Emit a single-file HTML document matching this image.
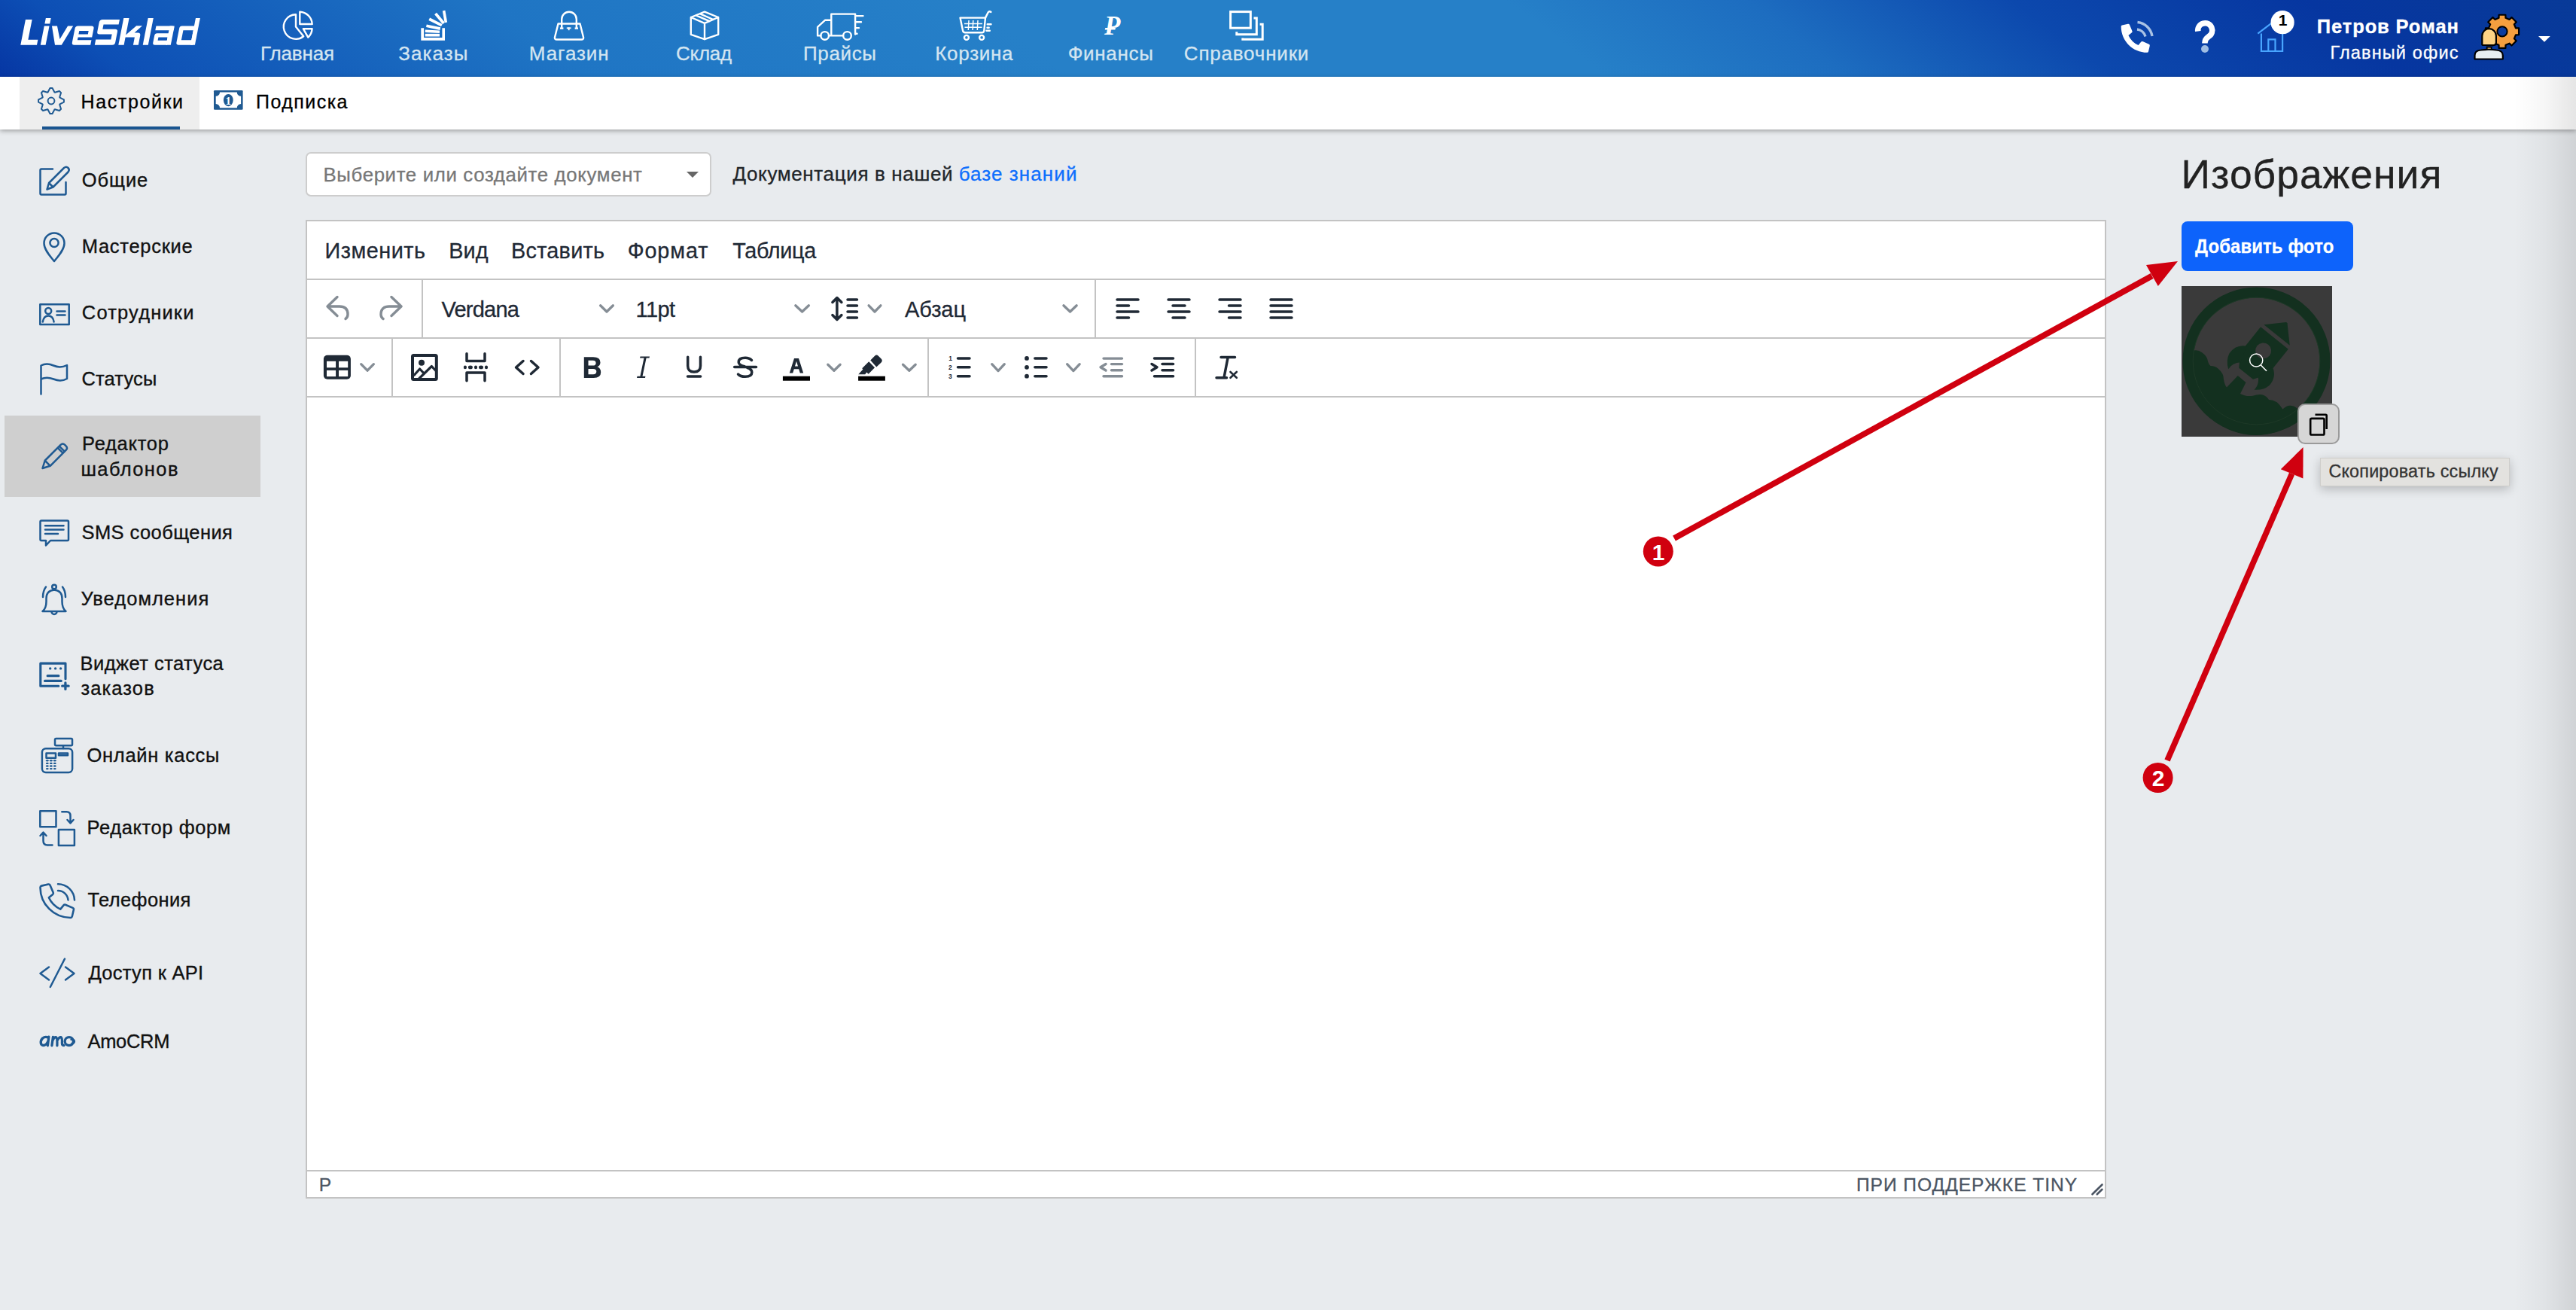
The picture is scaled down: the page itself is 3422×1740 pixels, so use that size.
<!DOCTYPE html>
<html><head><meta charset="utf-8"><title>LiveSklad</title>
<style>
html,body{margin:0;padding:0}
body{width:3422px;height:1740px;overflow:hidden;background:#e8ebee;position:relative;font-family:"Liberation Sans",sans-serif}
.t{position:absolute;white-space:nowrap;line-height:1;-webkit-text-stroke:0.3px currentColor}
.sb{-webkit-text-stroke:0.35px currentColor}
svg{display:block}
</style></head><body>
<div style="position:absolute;left:0px;top:0px;width:3422px;height:102px;background:linear-gradient(37deg,#0636a3 0%,#0d4fb5 5%,#1f75c4 22%,#2680c8 40%,#2680c8 60%,#1d6dc0 69%,#0c48ad 79%,#0636a0 90%,#083a98 100%)"></div>
<svg style="position:absolute;left:0px;top:0px;overflow:visible;" width="300" height="80" viewBox="0 0 300 80"><g fill="#fff" fill-rule="evenodd" transform="translate(0 59.7) skewX(-11.1)"><path d="M27.3 0 H49 V-7 H36 V-33.8 H27.3 Z"/><path d="M53.8 -25.3 H60.6 V0 H53.8 V-25.3 Z "/><path d="M53.9 -35.6 H60.7 V-28.1 H53.9 V-35.6 Z "/><path d="M64 -25.3 H71 L78 -7.6 L85.1 -25.3 H92.2 L81.8 0 H73 Z"/><path d="M98.7 -25.3 H116.7 Q120.2 -25.3 120.2 -21.8 V-10.2 H101.6 V-6.4 H120.2 V0 H98.7 Q95.2 0 95.2 -3.5 V-21.8 Q95.2 -25.3 98.7 -25.3 Z M101.6 -18.7 V-14.2 H114 V-18.7 Z"/><path d="M129.8 -33.8 H152.3 V-27.1 H132.2 V-21 H149 Q152.5 -21 152.5 -17.5 V-3.5 Q152.5 0 149 0 H125.8 V-7.3 H145.9 V-14.3 H129.3 Q125.8 -14.3 125.8 -17.8 V-29.8 Q125.8 -33.8 129.8 -33.8 Z"/><path d="M157.3 -35.6 H164.6 V0 H157.3 V-35.6 Z "/><path d="M163 -10.1 V-11.8 L176.2 -25.4 H184 L175.4 -16.2 H180 Q183.8 -16.2 183.8 -12.4 V0 H176.9 V-10.1 Z"/><path d="M189.7 -35.6 H196.8 V0 H189.7 V-35.6 Z "/><path d="M202.5 -25.3 H223.8 Q226.8 -25.3 226.8 -22.3 V-19.5 H202.5 V-25.3 Z "/><path d="M220.6 -25.3 H226.8 V0 H220.6 V-25.3 Z "/><path d="M205.7 -15.5 H222 V0 H205.7 Q202.7 0 202.7 -3 V-12.5 Q202.7 -15.5 205.7 -15.5 Z M208.4 -10.3 H220.6 V-5.9 H208.4 V-10.3 Z "/><path d="M236.8 -25.3 H256 V0 H236.8 Q233.8 0 233.8 -3 V-22.3 Q233.8 -25.3 236.8 -25.3 Z M239.6 -19.5 H253 V-6.5 H239.6 V-19.5 Z "/><path d="M253 -35.6 H258.9 V0 H253 V-35.6 Z "/></g></svg>
<div id="T_nav0" class="t" style="left:346.04px;top:58.00px;font-size:26px;color:#d4e5f1;font-weight:normal;font-family:'Liberation Sans',sans-serif;font-style:normal;letter-spacing:-0.150px;">Главная</div>
<div id="T_nav1" class="t" style="left:529.24px;top:58.00px;font-size:26px;color:#d4e5f1;font-weight:normal;font-family:'Liberation Sans',sans-serif;font-style:normal;letter-spacing:1.060px;">Заказы</div>
<div id="T_nav2" class="t" style="left:702.84px;top:58.00px;font-size:26px;color:#d4e5f1;font-weight:normal;font-family:'Liberation Sans',sans-serif;font-style:normal;letter-spacing:0.917px;">Магазин</div>
<div id="T_nav3" class="t" style="left:898.04px;top:58.00px;font-size:26px;color:#d4e5f1;font-weight:normal;font-family:'Liberation Sans',sans-serif;font-style:normal;letter-spacing:-0.275px;">Склад</div>
<div id="T_nav4" class="t" style="left:1067.04px;top:58.00px;font-size:26px;color:#d4e5f1;font-weight:normal;font-family:'Liberation Sans',sans-serif;font-style:normal;letter-spacing:0.640px;">Прайсы</div>
<div id="T_nav5" class="t" style="left:1242.24px;top:58.00px;font-size:26px;color:#d4e5f1;font-weight:normal;font-family:'Liberation Sans',sans-serif;font-style:normal;letter-spacing:0.717px;">Корзина</div>
<div id="T_nav6" class="t" style="left:1418.64px;top:58.00px;font-size:26px;color:#d4e5f1;font-weight:normal;font-family:'Liberation Sans',sans-serif;font-style:normal;letter-spacing:0.683px;">Финансы</div>
<div id="T_nav7" class="t" style="left:1572.84px;top:58.00px;font-size:26px;color:#d4e5f1;font-weight:normal;font-family:'Liberation Sans',sans-serif;font-style:normal;letter-spacing:0.800px;">Справочники</div>
<svg style="position:absolute;left:365px;top:8px;overflow:visible;" width="60" height="50" viewBox="0 0 60 50"><path fill="none" stroke="#fff" stroke-width="2.4" stroke-linejoin="round" stroke-linecap="round" d="M28 11.2 A16.3 16.3 0 1 0 38.2 40.3 L28 27.6 Z"/><path fill="none" stroke="#fff" stroke-width="2.4" stroke-linejoin="round" stroke-linecap="round" d="M33.3 7.7 A17 17 0 0 1 49.7 24 L33.3 24 Z"/><path fill="none" stroke="#fff" stroke-width="2.4" stroke-linejoin="round" stroke-linecap="round" d="M37.8 30.2 L49.6 30.2 A17.2 17.2 0 0 1 44.3 41.6 Z"/></svg>
<svg style="position:absolute;left:365px;top:8px;overflow:visible;" width="240" height="50" viewBox="0 0 240 50"><g fill="#fff"><path d="M194.3 29.3h3.8v12.6h24.3V29.3h3.6v16.4h-31.7z"/><rect x="199.8" y="36.8" width="19.2" height="3.7"/><rect x="199.8" y="31.9" width="19.2" height="3.7" transform="rotate(3 209 33.7)"/><rect x="201.2" y="26.3" width="18.8" height="3.7" transform="rotate(12 210.6 28.1)"/><rect x="204.2" y="19.6" width="18.6" height="3.7" transform="rotate(27 213.5 21.5)"/><rect x="210.5" y="14.6" width="17" height="3.7" transform="rotate(50 219 16.5)"/><rect x="218" y="12.2" width="16" height="3.6" transform="rotate(80 226 14)"/></g></svg>
<svg style="position:absolute;left:725px;top:8px;overflow:visible;" width="60" height="50" viewBox="0 0 60 50"><path fill="none" stroke="#fff" stroke-width="2.4" stroke-linejoin="round" stroke-linecap="round" d="M16.5 23.5 L45.5 23.5 L50 41.5 Q50.5 44.5 47.5 44.5 L14.5 44.5 Q11.5 44.5 12 41.5 Z"/><path fill="none" stroke="#fff" stroke-width="2.4" stroke-linejoin="round" stroke-linecap="round" d="M21.2 28 V17.5 A9.8 9.8 0 0 1 40.8 17.5 V28"/><g fill="#fff"><rect x="19" y="28.4" width="4.4" height="2.4"/><rect x="38.6" y="28.4" width="4.4" height="2.4"/><rect x="27.8" y="28.4" width="5.8" height="1.8"/><rect x="29.8" y="28.4" width="1.8" height="3.8"/></g></svg>
<svg style="position:absolute;left:725px;top:8px;overflow:visible;" width="240" height="50" viewBox="0 0 240 50"><path fill="none" stroke="#fff" stroke-width="2.4" stroke-linejoin="round" stroke-linecap="round" d="M192.8 15 L211 7.6 L229.2 15 V37.8 L211 44.2 L192.8 37.8 Z M192.8 15 L211 22.9 L229.2 15 M211 22.9 V44.2 M199.5 12.3 L217.5 20.2 M204.5 10.2 L222.5 18"/></svg>
<svg style="position:absolute;left:1075px;top:8px;overflow:visible;" width="80" height="50" viewBox="0 0 80 50"><path fill="none" stroke="#fff" stroke-width="2.4" stroke-linejoin="round" stroke-linecap="round" d="M29.3 39.4 V10.6 H61.1 V37.5 M44.6 39.4 H26 M15.2 39.4 H11.1 V27.8 L21.2 18.7 H29.3"/><circle fill="none" stroke="#fff" stroke-width="2.4" stroke-linejoin="round" stroke-linecap="round" cx="20.7" cy="39.4" r="5.3"/><circle fill="none" stroke="#fff" stroke-width="2.4" stroke-linejoin="round" stroke-linecap="round" cx="50.5" cy="39.4" r="5.3"/><path fill="none" stroke="#fff" stroke-width="2.4" stroke-linejoin="round" stroke-linecap="round" d="M61.6 13.1 H71.5 M61.6 21.2 H69 M61.6 29.1 H66 M61.6 36.8 H63.5"/></svg>
<svg style="position:absolute;left:1075px;top:8px;overflow:visible;" width="250" height="50" viewBox="0 0 250 50"><path fill="none" stroke="#fff" stroke-width="2.4" stroke-linejoin="round" stroke-linecap="round" d="M200.5 15.6 H234 L232.3 32.5 Q232 35.3 229.5 35.3 H207 Q204.5 35.3 204 32.5 Z"/><path fill="none" stroke="#fff" stroke-width="2.4" stroke-linejoin="round" stroke-linecap="round" d="M234 15.6 L237.6 8.5 Q239.3 6.2 241.4 8"/><g stroke="#fff" stroke-width="1.5" fill="none"><path d="M206 23.4 H230 M206.5 28.3 H229.5 M212 19 L211.3 32 M217.8 19 L217.1 32 M224 19 L223.3 32"/></g><circle fill="none" stroke="#fff" stroke-width="2.4" stroke-linejoin="round" stroke-linecap="round" cx="208.9" cy="41.9" r="3"/><circle fill="none" stroke="#fff" stroke-width="2.4" stroke-linejoin="round" stroke-linecap="round" cx="229.1" cy="41.9" r="3"/><path fill="none" stroke="#fff" stroke-width="2.4" stroke-linejoin="round" stroke-linecap="round" stroke-width="1.8" d="M236.7 24.2 H241.5 M236.5 28.8 H238.7 M235.5 32.8 H239.8"/></svg>
<svg style="position:absolute;left:1455px;top:8px;overflow:visible;" width="45" height="50" viewBox="0 0 45 50"><text x="12" y="37.5" font-family="Liberation Serif" font-weight="bold" font-style="italic" font-size="35" fill="#fff">P</text><path d="M13.3 29 H27 L26.4 31.6 H12.7 Z" fill="#fff"/></svg>
<svg style="position:absolute;left:1455px;top:8px;overflow:visible;" width="240" height="50" viewBox="0 0 240 50"><g fill="none" stroke="#fff" stroke-width="3"><rect x="179.6" y="7.6" width="26.7" height="21.6"/><path d="M187.8 34.2 V37.7 H214.3 V15.9 H210.5"/><path d="M195.8 42.4 V44.2 H222.2 V24.3 H218.6"/></g></svg>
<svg style="position:absolute;left:2800px;top:10px;overflow:visible;" width="260" height="80" viewBox="0 0 260 80"><path fill="#fff" transform="translate(17.7 21.7) scale(0.0745)" d="M497.39 361.8l-112-48a24 24 0 0 0-28 6.9l-49.6 60.6A370.66 370.66 0 0 1 130.6 204.11l60.6-49.6a23.94 23.94 0 0 0 6.9-28l-48-112A24.16 24.16 0 0 0 122.6.61l-104 24A24 24 0 0 0 0 48c0 256.5 207.9 464 464 464a24 24 0 0 0 23.4-18.6l24-104a24.29 24.29 0 0 0-14.01-27.6z"/><g fill="none" stroke="#a9c2e4" stroke-width="3.4"><path d="M39 29 A13 13 0 0 1 50 38.5"/><path d="M39.5 19.5 A22 22 0 0 1 59 38"/></g><path fill="none" stroke="#fff" stroke-width="7.6" stroke-linecap="butt" d="M119.8 31.5 A9.5 9.5 0 1 1 134 38.5 Q129 42 129 46.5 V47.5"/><circle cx="129" cy="55" r="5" fill="#9fbde3"/><g fill="none" stroke="#48a5ff" stroke-width="2.2"><path d="M199.3 34.6 L218 20.4 L236.7 34.6 M203.9 34.5 V58 H232.1 V34.5 M213.3 58 V42.4 H222.5 V58"/></g><circle cx="232.1" cy="19.7" r="15.6" fill="#fff"/><text x="232.5" y="24" text-anchor="middle" font-family="Liberation Sans" font-weight="bold" font-size="21" fill="#000">1</text></svg>
<div id="T_user" class="t" style="left:3077.87px;top:23.00px;font-size:25.5px;color:#fff;font-weight:bold;font-family:'Liberation Sans',sans-serif;font-style:normal;letter-spacing:0.882px;">Петров Роман</div>
<div id="T_office" class="t" style="left:3095.39px;top:59.00px;font-size:23.5px;color:#fff;font-weight:normal;font-family:'Liberation Sans',sans-serif;font-style:normal;letter-spacing:1.155px;">Главный офис</div>
<svg style="position:absolute;left:3270px;top:10px;overflow:visible;" width="130" height="80" viewBox="0 0 130 80"><path d="M71.95 27.30 L76.07 27.41 L76.07 36.19 L71.95 36.30 L69.87 41.31 L72.71 44.30 L66.50 50.51 L63.51 47.67 L58.50 49.75 L58.39 53.87 L49.61 53.87 L49.50 49.75 L44.49 47.67 L41.50 50.51 L35.29 44.30 L38.13 41.31 L36.05 36.30 L31.93 36.19 L31.93 27.41 L36.05 27.30 L38.13 22.29 L35.29 19.30 L41.50 13.09 L44.49 15.93 L49.50 13.85 L49.61 9.73 L58.39 9.73 L58.50 13.85 L63.51 15.93 L66.50 13.09 L72.71 19.30 L69.87 22.29 Z" fill="#f59f3f" stroke="#000" stroke-width="2.2" stroke-linejoin="round"/><circle cx="54" cy="31.8" r="6.6" fill="#0a3ca0" stroke="#000" stroke-width="2"/><path d="M33.7 52.5 H39.6 V57 H33.7 Z" fill="#e6bd78" stroke="#000" stroke-width="1.8"/><path d="M27.3 49.2 V37.5 A9.3 9.3 0 0 1 45.9 37.5 V46.5 Q45.9 50 42.5 50 H30 Q27.3 50 27.3 49.2 Z" fill="#fdd385" stroke="#000" stroke-width="2.2"/><path d="M17.5 68.5 V63.5 Q17.5 57 26 56.5 Q36.5 55 46 56.5 Q54.8 57 54.8 63.5 V68.5 Z" fill="#e8eff1" stroke="#000" stroke-width="2.2" stroke-linejoin="round"/><path d="M102 37.9 H117.8 L110 45.8 Z" fill="#fff"/></svg>
<div style="position:absolute;left:0px;top:102px;width:3422px;height:70px;background:#fff;box-shadow:0 2px 6px rgba(0,0,0,0.32)"></div>
<div style="position:absolute;left:26px;top:102px;width:239px;height:70px;background:#eeeeee"></div>
<div style="position:absolute;left:56px;top:168px;width:183px;height:4px;background:#1a5590"></div>
<svg style="position:absolute;left:45px;top:111px;overflow:visible;" width="46" height="46" viewBox="0 0 46 46"><path d="M34.48 18.58 L39.93 21.46 L39.93 24.54 L34.48 27.42 L34.24 28.00 L36.06 33.88 L33.88 36.06 L28.00 34.24 L27.42 34.48 L24.54 39.93 L21.46 39.93 L18.58 34.48 L18.00 34.24 L12.12 36.06 L9.94 33.88 L11.76 28.00 L11.52 27.42 L6.07 24.54 L6.07 21.46 L11.52 18.58 L11.76 18.00 L9.94 12.12 L12.12 9.94 L18.00 11.76 L18.58 11.52 L21.46 6.07 L24.54 6.07 L27.42 11.52 L28.00 11.76 L33.88 9.94 L36.06 12.12 L34.24 18.00 Z" fill="none" stroke="#1f5a92" stroke-width="2" stroke-linejoin="round"/><circle cx="23" cy="23" r="4.4" fill="none" stroke="#1f5a92" stroke-width="2"/></svg>
<div id="T_sub0" class="t" style="left:107.50px;top:123.00px;font-size:25px;color:#000;font-weight:normal;font-family:'Liberation Sans',sans-serif;font-style:normal;letter-spacing:1.625px;">Настройки</div>
<svg style="position:absolute;left:270px;top:105px;overflow:visible;" width="60" height="45" viewBox="0 0 60 45"><rect x="14" y="15.1" width="38.6" height="25.7" rx="1.2" fill="#1f5a92"/><path fill="#fff" d="M22 17.5 H44.8 A5.3 5.3 0 0 0 50.1 22.8 V33 A5.3 5.3 0 0 0 44.8 38.3 H22 A5.3 5.3 0 0 0 16.7 33 V22.8 A5.3 5.3 0 0 0 22 17.5 Z"/><ellipse cx="33.3" cy="28.1" rx="6.4" ry="8.1" fill="#1f5a92"/><text x="33.3" y="33.5" text-anchor="middle" font-family="Liberation Serif" font-weight="bold" font-size="15" fill="#fff">1</text></svg>
<div id="T_sub1" class="t" style="left:340.10px;top:123.00px;font-size:25px;color:#000;font-weight:normal;font-family:'Liberation Sans',sans-serif;font-style:normal;letter-spacing:1.443px;">Подписка</div>
<div style="position:absolute;left:6px;top:552px;width:340px;height:108px;background:#cfcfcf"></div>
<div id="T_s0" class="t" style="left:108.87px;top:227.00px;font-size:25.5px;color:#111;font-weight:normal;font-family:'Liberation Sans',sans-serif;font-style:normal;letter-spacing:0.875px;-webkit-text-stroke:0.35px #111;">Общие</div>
<div id="T_s1" class="t" style="left:108.67px;top:315.00px;font-size:25.5px;color:#111;font-weight:normal;font-family:'Liberation Sans',sans-serif;font-style:normal;letter-spacing:0.722px;-webkit-text-stroke:0.35px #111;">Мастерские</div>
<div id="T_s2" class="t" style="left:108.87px;top:403.00px;font-size:25.5px;color:#111;font-weight:normal;font-family:'Liberation Sans',sans-serif;font-style:normal;letter-spacing:1.156px;-webkit-text-stroke:0.35px #111;">Сотрудники</div>
<div id="T_s3" class="t" style="left:108.47px;top:491.00px;font-size:25.5px;color:#111;font-weight:normal;font-family:'Liberation Sans',sans-serif;font-style:normal;letter-spacing:0.133px;-webkit-text-stroke:0.35px #111;">Статусы</div>
<div id="T_s4a" class="t" style="left:109.07px;top:577.00px;font-size:25.5px;color:#111;font-weight:normal;font-family:'Liberation Sans',sans-serif;font-style:normal;letter-spacing:0.714px;-webkit-text-stroke:0.35px #111;">Редактор</div>
<div id="T_s4b" class="t" style="left:107.47px;top:611.00px;font-size:25.5px;color:#111;font-weight:normal;font-family:'Liberation Sans',sans-serif;font-style:normal;letter-spacing:1.386px;-webkit-text-stroke:0.35px #111;">шаблонов</div>
<div id="T_s5" class="t" style="left:108.47px;top:695.00px;font-size:25.5px;color:#111;font-weight:normal;font-family:'Liberation Sans',sans-serif;font-style:normal;letter-spacing:0.425px;-webkit-text-stroke:0.35px #111;">SMS сообщения</div>
<div id="T_s6" class="t" style="left:107.47px;top:783.00px;font-size:25.5px;color:#111;font-weight:normal;font-family:'Liberation Sans',sans-serif;font-style:normal;letter-spacing:1.040px;-webkit-text-stroke:0.35px #111;">Уведомления</div>
<div id="T_s7a" class="t" style="left:106.47px;top:869.00px;font-size:25.5px;color:#111;font-weight:normal;font-family:'Liberation Sans',sans-serif;font-style:normal;letter-spacing:0.454px;-webkit-text-stroke:0.35px #111;">Виджет статуса</div>
<div id="T_s7b" class="t" style="left:107.47px;top:902.00px;font-size:25.5px;color:#111;font-weight:normal;font-family:'Liberation Sans',sans-serif;font-style:normal;letter-spacing:1.100px;-webkit-text-stroke:0.35px #111;">заказов</div>
<div id="T_s8" class="t" style="left:115.47px;top:991.00px;font-size:25.5px;color:#111;font-weight:normal;font-family:'Liberation Sans',sans-serif;font-style:normal;letter-spacing:0.709px;-webkit-text-stroke:0.35px #111;">Онлайн кассы</div>
<div id="T_s9" class="t" style="left:115.47px;top:1087.00px;font-size:25.5px;color:#111;font-weight:normal;font-family:'Liberation Sans',sans-serif;font-style:normal;letter-spacing:0.600px;-webkit-text-stroke:0.35px #111;">Редактор форм</div>
<div id="T_s10" class="t" style="left:116.47px;top:1183.00px;font-size:25.5px;color:#111;font-weight:normal;font-family:'Liberation Sans',sans-serif;font-style:normal;letter-spacing:0.388px;-webkit-text-stroke:0.35px #111;">Телефония</div>
<div id="T_s11" class="t" style="left:117.47px;top:1280.00px;font-size:25.5px;color:#111;font-weight:normal;font-family:'Liberation Sans',sans-serif;font-style:normal;letter-spacing:0.300px;-webkit-text-stroke:0.35px #111;">Доступ к API</div>
<div id="T_s12" class="t" style="left:116.47px;top:1371.00px;font-size:25.5px;color:#111;font-weight:normal;font-family:'Liberation Sans',sans-serif;font-style:normal;letter-spacing:-0.300px;-webkit-text-stroke:0.35px #111;">AmoCRM</div>
<svg style="position:absolute;left:0px;top:0px;overflow:visible;" width="400" height="1740" viewBox="0 0 400 1740"><path fill="none" stroke="#1f5a92" stroke-width="2.5" stroke-linejoin="round" stroke-linecap="round" d="M70 224.5 H55 Q53.5 224.5 53.5 226 V257 Q53.5 258.5 55 258.5 H86 Q87.5 258.5 87.5 257 V242"/><path fill="none" stroke="#1f5a92" stroke-width="2.5" stroke-linejoin="round" stroke-linecap="round" d="M62.5 251.5 L65 243 L85 223 Q88 220.5 90.5 223 Q93 225.5 90.5 228.5 L70.5 248.5 Z M65 243 L70.5 248.5"/><path fill="none" stroke="#1f5a92" stroke-width="2.5" stroke-linejoin="round" stroke-linecap="round" d="M72 347 C67 340.5 58.5 332 58.5 323 A13.5 13.5 0 0 1 85.5 323 C85.5 332 77 340.5 72 347 Z"/><circle fill="none" stroke="#1f5a92" stroke-width="2.5" stroke-linejoin="round" stroke-linecap="round" cx="72" cy="322.5" r="5.6"/><rect fill="none" stroke="#1f5a92" stroke-width="2.5" stroke-linejoin="round" stroke-linecap="round" x="53.3" y="404.3" width="38.4" height="26.6" stroke-linejoin="miter"/><circle fill="none" stroke="#1f5a92" stroke-width="2.5" stroke-linejoin="round" stroke-linecap="round" cx="64.2" cy="413" r="4"/><path fill="none" stroke="#1f5a92" stroke-width="2.5" stroke-linejoin="round" stroke-linecap="round" d="M56.8 427.5 Q58 419.5 64.2 419.5 Q70.4 419.5 71.6 427.5 M75.5 413.4 H86.5 M75.5 418.6 H86.5"/><path fill="none" stroke="#1f5a92" stroke-width="2.5" stroke-linejoin="round" stroke-linecap="round" d="M54.5 523.5 V485.5 Q62 481.5 71 485.5 Q80 489.5 89 485 V503 Q81 507.5 71 503.5 Q62 500 54.5 503.5"/><g transform="translate(56.5 622) rotate(-45)"><path fill="none" stroke="#1f5a92" stroke-width="2.5" stroke-linejoin="round" stroke-linecap="round" d="M0 0 L9.5 -5 H39 Q43 -5 43 -1 V1 Q43 5 39 5 H9.5 Z M9.5 -5 V5 M33.5 -5 V5 M36.5 -5 V5"/></g><path fill="none" stroke="#1f5a92" stroke-width="2.5" stroke-linejoin="round" stroke-linecap="round" d="M55 691.5 H89.5 Q91 691.5 91 693 V716.5 Q91 718 89.5 718 H67 L61 724.5 V718 H55 Q53.5 718 53.5 716.5 V693 Q53.5 691.5 55 691.5 Z M60 698.2 H84.5 M60 703.6 H84.5 M60 709 H77"/><path fill="none" stroke="#1f5a92" stroke-width="2.5" stroke-linejoin="round" stroke-linecap="round" d="M56.5 812 Q61.5 808 61.5 799 V795 Q61.5 784.5 72 783.5 Q82.5 784.5 82.5 795 V799 Q82.5 808 87.5 812 Z M68.5 812.5 A3.5 3.5 0 0 0 75.5 812.5"/><circle fill="none" stroke="#1f5a92" stroke-width="2.5" stroke-linejoin="round" stroke-linecap="round" cx="72" cy="779.5" r="2.8"/><path fill="none" stroke="#1f5a92" stroke-width="2.5" stroke-linejoin="round" stroke-linecap="round" d="M57 793 Q57 785 61 779.5 M87 793 Q87 785 83 779.5"/><path fill="none" stroke="#1f5a92" stroke-width="3.1" stroke-linecap="round" stroke-linejoin="round" d="M77.8 911.2 H53.8 V881.1 H87 V901.8"/><path fill="none" stroke="#1f5a92" stroke-width="3.3" stroke-linecap="round" d="M63.2 897.7 H77.8 M59.6 904.4 H81.2 M86.9 907 V915.4 M82.7 911.2 H91.1"/><g fill="#1f5a92"><circle cx="66.7" cy="887.9" r="1.7"/><circle cx="73.6" cy="887.9" r="1.7"/><circle cx="80.6" cy="887.9" r="1.7"/></g><rect fill="none" stroke="#1f5a92" stroke-width="2.5" stroke-linejoin="round" stroke-linecap="round" stroke-width="2.8" x="73" y="981" width="23" height="9.3" rx="1.5"/><path fill="none" stroke="#1f5a92" stroke-width="2.5" stroke-linejoin="round" stroke-linecap="round" stroke-width="2.8" d="M84 990.5 V994"/><rect fill="none" stroke="#1f5a92" stroke-width="2.5" stroke-linejoin="round" stroke-linecap="round" stroke-width="2.9" x="55.9" y="994.2" width="40.2" height="31.8" rx="5"/><rect fill="none" stroke="#1f5a92" stroke-width="2.5" stroke-linejoin="round" stroke-linecap="round" stroke-width="2.2" x="61.5" y="1000.5" width="12.5" height="6.3"/><rect fill="none" stroke="#1f5a92" stroke-width="2.5" stroke-linejoin="round" stroke-linecap="round" stroke-width="2.2" x="78" y="1000.5" width="12" height="2.8"/><g fill="#1f5a92"><ellipse cx="62.8" cy="1010.3" rx="1.9" ry="1.2"/><ellipse cx="62.8" cy="1013.9" rx="1.9" ry="1.2"/><ellipse cx="62.8" cy="1017.5" rx="1.9" ry="1.2"/><ellipse cx="62.8" cy="1021.0999999999999" rx="1.9" ry="1.2"/><ellipse cx="67.8" cy="1010.3" rx="1.9" ry="1.2"/><ellipse cx="67.8" cy="1013.9" rx="1.9" ry="1.2"/><ellipse cx="67.8" cy="1017.5" rx="1.9" ry="1.2"/><ellipse cx="67.8" cy="1021.0999999999999" rx="1.9" ry="1.2"/><ellipse cx="72.8" cy="1010.3" rx="1.9" ry="1.2"/><ellipse cx="72.8" cy="1013.9" rx="1.9" ry="1.2"/><ellipse cx="72.8" cy="1017.5" rx="1.9" ry="1.2"/><ellipse cx="72.8" cy="1021.0999999999999" rx="1.9" ry="1.2"/></g><rect fill="none" stroke="#1f5a92" stroke-width="2.5" stroke-linejoin="round" stroke-linecap="round" stroke-linejoin="miter" x="53.3" y="1077.3" width="21.2" height="21"/><rect fill="none" stroke="#1f5a92" stroke-width="2.5" stroke-linejoin="round" stroke-linecap="round" stroke-linejoin="miter" x="77.9" y="1102" width="21" height="21"/><path fill="none" stroke="#1f5a92" stroke-width="2.5" stroke-linejoin="round" stroke-linecap="round" d="M82.3 1078.2 H88.5 Q93.5 1078.2 93.5 1083.5 V1093 M89.5 1089 L93.5 1093.3 L97.5 1089 M69.5 1122.4 H63 Q57.5 1122.4 57.5 1117 V1106 M53.5 1110 L57.5 1105.7 L61.5 1110"/><path fill="none" stroke="#1f5a92" stroke-width="30" stroke-linejoin="round" transform="translate(53.5 1174.5) scale(0.0868)" d="M497.39 361.8l-112-48a24 24 0 0 0-28 6.9l-49.6 60.6A370.66 370.66 0 0 1 130.6 204.11l60.6-49.6a23.94 23.94 0 0 0 6.9-28l-48-112A24.16 24.16 0 0 0 122.6.61l-104 24A24 24 0 0 0 0 48c0 256.5 207.9 464 464 464a24 24 0 0 0 23.4-18.6l24-104a24.29 24.29 0 0 0-14.01-27.6z"/><path fill="none" stroke="#1f5a92" stroke-width="2.5" stroke-linejoin="round" stroke-linecap="round" d="M77 1183 A13.5 13.5 0 0 1 90.5 1195.5 M77 1174.3 A22 22 0 0 1 99 1195.5"/><path fill="none" stroke="#1f5a92" stroke-width="2.5" stroke-linejoin="round" stroke-linecap="round" stroke-width="2.9" d="M65 1284.5 L53.5 1293 L65 1301.5 M87 1284.5 L98.5 1293 L87 1301.5 M86 1273.5 L66.8 1311"/><g transform="translate(48 1368)" fill="none" stroke="#1f5a92" stroke-width="3.3" stroke-linecap="round" stroke-linejoin="round"><path d="M16.3 10.2 Q12 8.2 8.6 11 Q5.3 14.5 6.4 18.3 Q7.7 21 10.8 20.4 Q14.3 19.4 16 14.5 M16.8 9.2 L15.4 20.8 M20.9 20.8 L22.4 9.4 M22.2 13.5 Q24 9.4 26.3 9.6 Q28.3 10.4 27.9 20.8 M28.4 13.5 Q30.5 9.3 32.8 9.6 Q34.8 10.4 34.4 17.5 Q34.4 20.6 37 20.6"/><ellipse cx="43.8" cy="15.1" rx="5.6" ry="5.5"/><path stroke-width="2.6" d="M46.6 12.8 Q50.6 12.2 50.8 15.2 Q50.8 17.6 47.5 18"/></g></svg>
<div style="position:absolute;left:406px;top:202px;width:539px;height:59px;box-sizing:border-box;background:#fff;border:2px solid #cdcdcd;border-radius:7px"></div>
<div id="T_sel" class="t" style="left:429.45px;top:220.00px;font-size:25.8px;color:#777;font-weight:normal;font-family:'Liberation Sans',sans-serif;font-style:normal;letter-spacing:0.652px;">Выберите или создайте документ</div>
<svg style="position:absolute;left:905px;top:220px;overflow:visible;" width="30" height="25" viewBox="0 0 30 25"><path d="M7 8 H23 L15 16 Z" fill="#666"/></svg>
<div id="T_doc" class="t" style="left:973.44px;top:218.00px;font-size:26px;color:#212529;font-weight:normal;font-family:'Liberation Sans',sans-serif;font-style:normal;letter-spacing:0.642px;">Документация в нашей</div>
<div id="T_link" class="t" style="left:1273.64px;top:218.00px;font-size:26px;color:#0d6efd;font-weight:normal;font-family:'Liberation Sans',sans-serif;font-style:normal;letter-spacing:1.090px;">базе знаний</div>
<div style="position:absolute;left:406px;top:292px;width:2392px;height:1300px;box-sizing:border-box;background:#fff;border:2px solid #c3c3c3"></div>
<div style="position:absolute;left:408px;top:370px;width:2388px;height:2px;background:#c3c3c3"></div>
<div style="position:absolute;left:408px;top:448px;width:2388px;height:2px;background:#c3c3c3"></div>
<div style="position:absolute;left:408px;top:526px;width:2388px;height:2px;background:#c3c3c3"></div>
<div style="position:absolute;left:408px;top:1554px;width:2388px;height:2px;background:#c3c3c3"></div>
<div style="position:absolute;left:560px;top:372px;width:2px;height:76px;background:#c3c3c3"></div>
<div style="position:absolute;left:1454px;top:372px;width:2px;height:76px;background:#c3c3c3"></div>
<div style="position:absolute;left:520px;top:450px;width:2px;height:76px;background:#c3c3c3"></div>
<div style="position:absolute;left:743px;top:450px;width:2px;height:76px;background:#c3c3c3"></div>
<div style="position:absolute;left:1232px;top:450px;width:2px;height:76px;background:#c3c3c3"></div>
<div style="position:absolute;left:1587px;top:450px;width:2px;height:76px;background:#c3c3c3"></div>
<div id="T_m0" class="t" style="left:431.47px;top:319.00px;font-size:28.8px;color:#1f2935;font-weight:normal;font-family:'Liberation Sans',sans-serif;font-style:normal;letter-spacing:0.514px;">Изменить</div>
<div id="T_m1" class="t" style="left:596.27px;top:319.00px;font-size:28.8px;color:#1f2935;font-weight:normal;font-family:'Liberation Sans',sans-serif;font-style:normal;letter-spacing:0.050px;">Вид</div>
<div id="T_m2" class="t" style="left:679.07px;top:319.00px;font-size:28.8px;color:#1f2935;font-weight:normal;font-family:'Liberation Sans',sans-serif;font-style:normal;letter-spacing:0.257px;">Вставить</div>
<div id="T_m3" class="t" style="left:833.67px;top:319.00px;font-size:28.8px;color:#1f2935;font-weight:normal;font-family:'Liberation Sans',sans-serif;font-style:normal;letter-spacing:0.900px;">Формат</div>
<div id="T_m4" class="t" style="left:973.27px;top:319.00px;font-size:28.8px;color:#1f2935;font-weight:normal;font-family:'Liberation Sans',sans-serif;font-style:normal;letter-spacing:-0.333px;">Таблица</div>
<div id="T_f0" class="t" style="left:586.46px;top:397.00px;font-size:29px;color:#1f2935;font-weight:normal;font-family:'Liberation Sans',sans-serif;font-style:normal;letter-spacing:-0.750px;">Verdana</div>
<div id="T_f1" class="t" style="left:844.46px;top:397.00px;font-size:29px;color:#1f2935;font-weight:normal;font-family:'Liberation Sans',sans-serif;font-style:normal;letter-spacing:-0.533px;">11pt</div>
<div id="T_f2" class="t" style="left:1202.06px;top:397.00px;font-size:29px;color:#1f2935;font-weight:normal;font-family:'Liberation Sans',sans-serif;font-style:normal;letter-spacing:-0.100px;">Абзац</div>
<div id="T_st0" class="t" style="left:423.72px;top:1562.00px;font-size:24.6px;color:#4b5563;font-weight:normal;font-family:'Liberation Sans',sans-serif;font-style:normal;letter-spacing:-6.600px;">P</div>
<div id="T_st1" class="t" style="left:2465.92px;top:1562.00px;font-size:24.6px;color:#4b5563;font-weight:normal;font-family:'Liberation Sans',sans-serif;font-style:normal;letter-spacing:0.959px;">ПРИ ПОДДЕРЖКЕ TINY</div>
<svg style="position:absolute;left:0px;top:0px;overflow:visible;pointer-events:none" width="3422" height="1740" viewBox="0 0 3422 1740"><path fill="none" stroke="#858d95" stroke-width="3.4" stroke-linecap="round" stroke-linejoin="round" d="M448 394.5 L435 407 L448 419.5 M435.5 407 H451 Q462 407 462 417.5 Q462 421.5 459 423.5"/><path fill="none" stroke="#858d95" stroke-width="3.4" stroke-linecap="round" stroke-linejoin="round" d="M520 394.5 L533 407 L520 419.5 M532.5 407 H517 Q506 407 506 417.5 Q506 421.5 509 423.5"/><path fill="none" stroke="#858d95" stroke-width="3.3" stroke-linecap="round" stroke-linejoin="round" d="M797.6 405.8 L806.0 414.0 L814.4 405.8"/><path fill="none" stroke="#858d95" stroke-width="3.3" stroke-linecap="round" stroke-linejoin="round" d="M1056.8 405.8 L1065.6 414.0 L1074.4 405.8"/><path fill="none" stroke="#858d95" stroke-width="3.3" stroke-linecap="round" stroke-linejoin="round" d="M1154.1 405.8 L1162.0 414.0 L1169.9 405.8"/><path fill="none" stroke="#858d95" stroke-width="3.3" stroke-linecap="round" stroke-linejoin="round" d="M1412.8999999999999 405.8 L1421.55 414.0 L1430.2 405.8"/><path fill="none" stroke="#1f2935" stroke-width="3.5" stroke-linecap="round" stroke-linejoin="round" d="M1105.9 401.5 L1111.9 395.5 L1117.9 401.5 M1105.9 418.5 L1111.9 424.5 L1117.9 418.5 M1111.9 396 V424 M1126 397.9 H1138.5 M1126 406 H1138.5 M1126 413.9 H1138.5 M1126 421.9 H1138.5"/><path fill="none" stroke="#1f2935" stroke-width="3.5" stroke-linecap="round" stroke-linejoin="round" d="M1484 398 H1512"/><path fill="none" stroke="#1f2935" stroke-width="3.5" stroke-linecap="round" stroke-linejoin="round" d="M1484 406 H1499.5"/><path fill="none" stroke="#1f2935" stroke-width="3.5" stroke-linecap="round" stroke-linejoin="round" d="M1484 413.9 H1512"/><path fill="none" stroke="#1f2935" stroke-width="3.5" stroke-linecap="round" stroke-linejoin="round" d="M1484 422 H1499.5"/><path fill="none" stroke="#1f2935" stroke-width="3.5" stroke-linecap="round" stroke-linejoin="round" d="M1552 398 H1580"/><path fill="none" stroke="#1f2935" stroke-width="3.5" stroke-linecap="round" stroke-linejoin="round" d="M1558 406 H1574"/><path fill="none" stroke="#1f2935" stroke-width="3.5" stroke-linecap="round" stroke-linejoin="round" d="M1552 413.9 H1580"/><path fill="none" stroke="#1f2935" stroke-width="3.5" stroke-linecap="round" stroke-linejoin="round" d="M1558 422 H1574"/><path fill="none" stroke="#1f2935" stroke-width="3.5" stroke-linecap="round" stroke-linejoin="round" d="M1620 398 H1648"/><path fill="none" stroke="#1f2935" stroke-width="3.5" stroke-linecap="round" stroke-linejoin="round" d="M1632.5 406 H1648"/><path fill="none" stroke="#1f2935" stroke-width="3.5" stroke-linecap="round" stroke-linejoin="round" d="M1620 413.9 H1648"/><path fill="none" stroke="#1f2935" stroke-width="3.5" stroke-linecap="round" stroke-linejoin="round" d="M1632.5 422 H1648"/><path fill="none" stroke="#1f2935" stroke-width="3.5" stroke-linecap="round" stroke-linejoin="round" d="M1688 398 H1716"/><path fill="none" stroke="#1f2935" stroke-width="3.5" stroke-linecap="round" stroke-linejoin="round" d="M1688 406 H1716"/><path fill="none" stroke="#1f2935" stroke-width="3.5" stroke-linecap="round" stroke-linejoin="round" d="M1688 413.9 H1716"/><path fill="none" stroke="#1f2935" stroke-width="3.5" stroke-linecap="round" stroke-linejoin="round" d="M1688 422 H1716"/><rect x="429.9" y="471.8" width="36" height="31.9" rx="5" fill="#1f2935"/><g fill="#fff"><rect x="434" y="479.8" width="12.1" height="8.5"/><rect x="450" y="479.8" width="12.2" height="8.5"/><rect x="434" y="491.9" width="12.1" height="8.2"/><rect x="450" y="491.9" width="12.2" height="8.2"/></g><path fill="none" stroke="#858d95" stroke-width="3.3" stroke-linecap="round" stroke-linejoin="round" d="M479.70000000000005 483.70000000000005 L488.05 492.2 L496.4 483.70000000000005"/><rect x="548" y="471.9" width="31.8" height="32" rx="1.5" fill="none" stroke="#1f2935" stroke-width="4"/><circle cx="560" cy="481.7" r="4" fill="#1f2935"/><path fill="none" stroke="#1f2935" stroke-width="3.2" stroke-linejoin="round" d="M549.5 499 L557.6 490 L562.8 495.5 M556.5 503 L573.4 486.5 L579 492.5"/><path fill="none" stroke="#1f2935" stroke-width="3.5" stroke-linecap="round" stroke-linejoin="round" stroke-width="4" stroke-linecap="round" d="M620 469.8 V479.5 H644 V469.8 M620 505.8 V495 H644 V505.8"/><g fill="#1f2935"><ellipse cx="617.9" cy="487.9" rx="2.1" ry="2.4"/><ellipse cx="624.9" cy="487.9" rx="3" ry="2.4"/><ellipse cx="632" cy="487.9" rx="2.1" ry="2.4"/><ellipse cx="639" cy="487.9" rx="3" ry="2.4"/><ellipse cx="646" cy="487.9" rx="2.1" ry="2.4"/></g><path fill="none" stroke="#1f2935" stroke-width="3.5" stroke-linecap="round" stroke-linejoin="round" stroke-width="3.8" d="M695 479.5 L685.5 488 L695 496.5 M705.5 479.5 L715 488 L705.5 496.5"/><path fill="#1f2935" d="M775.8 474.2 H788 Q797.5 474.2 797.5 481.2 Q797.5 485.5 793.5 487.3 Q798.2 489 798.2 494.5 Q798.2 502 788.5 502 H775.8 Z M781.5 478.8 V485.6 H787.5 Q791.6 485.6 791.6 482.2 Q791.6 478.8 787.5 478.8 Z M781.5 490 V497.3 H788 Q792.3 497.3 792.3 493.6 Q792.3 490 788 490 Z"/><path fill="#1f2935" d="M850.5 473.5 H863 L862.5 475.6 H858.6 L853.5 499.8 H857.4 L857 502 H846 L846.5 499.8 H850.4 L855.5 475.6 H850 Z"/><path fill="none" stroke="#1f2935" stroke-width="3.5" stroke-linecap="round" stroke-linejoin="round" stroke-width="3.4" stroke-linecap="butt" d="M913.7 474.2 V486 Q913.7 494 922 494 Q930.5 494 930.5 486 V474.2"/><path fill="none" stroke="#1f2935" stroke-width="3.5" stroke-linecap="round" stroke-linejoin="round" stroke-width="3.4" d="M913.5 500 H930.6"/><path fill="none" stroke="#1f2935" stroke-width="3.5" stroke-linecap="round" stroke-linejoin="round" stroke-width="3.4" stroke-linecap="butt" d="M998.5 478.5 Q995.5 475.3 990 475.3 Q981.2 475.3 981.2 481 Q981.2 485 989 486.8 M993 488.5 Q998.8 490.5 998.8 494.5 Q998.8 500.3 990 500.3 Q983.5 500.3 980.5 497"/><path fill="none" stroke="#1f2935" stroke-width="3.5" stroke-linecap="round" stroke-linejoin="round" stroke-width="3.4" d="M975.7 487.6 H1004.5"/><path fill="#1f2935" d="M1055 476 H1061 L1067.2 495.6 H1062.8 L1061.2 490.3 H1054.8 L1053.2 495.6 H1048.8 Z M1056 486.5 H1060 L1058 479.8 Z"/><rect x="1039.9" y="499.7" width="36.1" height="6" fill="#000"/><path fill="none" stroke="#858d95" stroke-width="3.3" stroke-linecap="round" stroke-linejoin="round" d="M1099.8 484.20000000000005 L1107.95 492.2 L1116.1000000000001 484.20000000000005"/><path fill="#1f2935" d="M1156.3 478.5 L1162 472.7 Q1164.4 470.4 1166.8 472.7 L1170.6 476.5 Q1173 479 1170.6 481.4 L1164.3 487.4 Z M1154.2 480.2 L1162 488.2 L1153.7 496.8 L1151.2 494.6 L1149.3 497.3 H1140.3 L1146.4 490.5 L1145.2 489.3 Z"/><rect x="1140.1" y="499.7" width="35.8" height="6" fill="#000"/><path fill="none" stroke="#858d95" stroke-width="3.3" stroke-linecap="round" stroke-linejoin="round" d="M1199.5 484.20000000000005 L1207.85 492.2 L1216.2 484.20000000000005"/><path fill="none" stroke="#1f2935" stroke-width="3.5" stroke-linecap="round" stroke-linejoin="round" d="M1272.5 475.9 H1288"/><path fill="none" stroke="#1f2935" stroke-width="3.5" stroke-linecap="round" stroke-linejoin="round" d="M1272.5 487.8 H1288"/><path fill="none" stroke="#1f2935" stroke-width="3.5" stroke-linecap="round" stroke-linejoin="round" d="M1272.5 499.7 H1288"/><g font-family="Liberation Sans" font-weight="bold" font-size="8.5" fill="#1f2935"><text x="1260.3" y="478.8">1</text><text x="1260" y="490.8">2</text><text x="1260" y="502.8">3</text></g><path fill="none" stroke="#858d95" stroke-width="3.3" stroke-linecap="round" stroke-linejoin="round" d="M1317.6999999999998 483.70000000000005 L1326.0 492.59999999999997 L1334.3000000000002 483.70000000000005"/><path fill="none" stroke="#1f2935" stroke-width="3.5" stroke-linecap="round" stroke-linejoin="round" d="M1374.8 475.9 H1390"/><path fill="none" stroke="#1f2935" stroke-width="3.5" stroke-linecap="round" stroke-linejoin="round" d="M1374.8 487.8 H1390"/><path fill="none" stroke="#1f2935" stroke-width="3.5" stroke-linecap="round" stroke-linejoin="round" d="M1374.8 499.7 H1390"/><g fill="#1f2935"><circle cx="1364" cy="475.9" r="2.9"/><circle cx="1364" cy="487.8" r="2.9"/><circle cx="1364" cy="499.7" r="2.9"/></g><path fill="none" stroke="#858d95" stroke-width="3.3" stroke-linecap="round" stroke-linejoin="round" d="M1417.6 483.70000000000005 L1425.9 492.59999999999997 L1434.2 483.70000000000005"/><path fill="none" stroke="#858d95" stroke-width="3.4" stroke-linecap="round" stroke-linejoin="round" stroke-width="3.5" d="M1466 476.1 H1490.5"/><path fill="none" stroke="#858d95" stroke-width="3.4" stroke-linecap="round" stroke-linejoin="round" stroke-width="3.5" d="M1476.5 483.6 H1490.5"/><path fill="none" stroke="#858d95" stroke-width="3.4" stroke-linecap="round" stroke-linejoin="round" stroke-width="3.5" d="M1476.5 491.8 H1490.5"/><path fill="none" stroke="#858d95" stroke-width="3.4" stroke-linecap="round" stroke-linejoin="round" stroke-width="3.5" d="M1466 499.7 H1490.5"/><path fill="none" stroke="#858d95" stroke-width="3.4" stroke-linecap="round" stroke-linejoin="round" stroke-width="3.2" d="M1469 483.5 L1462 487.7 L1469 492"/><path fill="none" stroke="#1f2935" stroke-width="3.5" stroke-linecap="round" stroke-linejoin="round" d="M1533.5 476.1 H1558.5"/><path fill="none" stroke="#1f2935" stroke-width="3.5" stroke-linecap="round" stroke-linejoin="round" d="M1544 483.6 H1558.5"/><path fill="none" stroke="#1f2935" stroke-width="3.5" stroke-linecap="round" stroke-linejoin="round" d="M1544 491.8 H1558.5"/><path fill="none" stroke="#1f2935" stroke-width="3.5" stroke-linecap="round" stroke-linejoin="round" d="M1533.5 499.7 H1558.5"/><path fill="none" stroke="#1f2935" stroke-width="3.5" stroke-linecap="round" stroke-linejoin="round" stroke-width="3.2" d="M1530 483.5 L1537 487.7 L1530 492"/><path fill="none" stroke="#1f2935" stroke-width="3.5" stroke-linecap="round" stroke-linejoin="round" stroke-width="3.4" d="M1622 474.5 H1640.5 M1631.2 474.5 L1626 501.5 M1616 501.8 H1629.5"/><path fill="none" stroke="#1f2935" stroke-width="2.6" stroke-linecap="round" d="M1634.5 494 L1642.8 501.8 M1642.8 494 L1634.5 501.8"/><path fill="none" stroke="#4b5563" stroke-width="2.6" stroke-linecap="round" d="M1779.5 1586.3 L1792.5 1573.5 M1785.8 1586.3 L1792.5 1579.8" transform="translate(1000 0)"/></svg>
<div id="T_h" class="t" style="left:2897.59px;top:205.00px;font-size:53.5px;color:#222;font-weight:normal;font-family:'Liberation Sans',sans-serif;font-style:normal;letter-spacing:0.960px;">Изображения</div>
<div style="position:absolute;left:2898px;top:294px;width:228px;height:66px;background:#0d63fb;border-radius:8px"></div>
<div id="T_btn" class="t" style="left:2916.06px;top:315.00px;font-size:25.7px;color:#fff;font-weight:bold;font-family:'Liberation Sans',sans-serif;font-style:normal;letter-spacing:0.125px;transform:scaleX(0.93);transform-origin:0.04px 0;">Добавить фото</div>
<svg style="position:absolute;left:2898px;top:380px;overflow:visible;" width="200" height="200" viewBox="0 0 200 200"><rect x="0" y="0" width="200" height="200" fill="#3a3a3a"/><path fill="#13301f" d="M16 85.5 Q22 84 27.5 88.5 Q34 93 35 100 Q36 104 38.5 106 Q45 106 49 110 Q56 116 56 124 Q57 131 60 134.5 L74.8 119 L85.5 128 L78 143 Q85 147 94.7 145.8 Q102 143 107 144.3 Q113 146 116 151 Q121 151 126.7 154.2 Q131 158 134.4 163.4 Q140 158 145 158.8 Q150 159 153 162 L164 170 A90 90 0 0 1 12 84 Z"/><circle cx="99.5" cy="99.5" r="91" fill="none" stroke="#13301f" stroke-width="14"/><circle cx="99.5" cy="99.5" r="84.3" fill="none" stroke="#1f3a28" stroke-width="0.9"/><g transform="translate(105 92) rotate(38.7)" fill="#13301f"><path d="M-22 -34.5 L-1 -55.5 Q0 -56 1 -55.5 L22 -34.5 Z"/><path d="M-23.5 -29.5 H23.5 V8 Q23.5 14 18 22 L12 31 H-12 L-18 22 Q-23.5 14 -23.5 8 Z"/><circle cx="-1" cy="-7" r="10.5" fill="#3a3a3a"/><path d="M-22 2 Q-35 9 -34 24 Q-32 34 -22 41 Q-23 31 -15 24 Z"/><path d="M22 2 Q35 9 34 24 Q32 34 22 41 Q23 31 15 24 Z"/></g><circle cx="99.2" cy="98.5" r="8.6" fill="none" stroke="#fff" stroke-width="1.5"/><path d="M105.3 105 L113 112.7" stroke="#fff" stroke-width="1.6"/></svg>
<div style="position:absolute;left:3052px;top:536px;width:56px;height:54px;box-sizing:border-box;background:#d6d6d6;border:2px solid #9a9a9a;border-radius:10px"></div>
<svg style="position:absolute;left:3052px;top:536px;overflow:visible;" width="56" height="54" viewBox="0 0 56 54"><path fill="none" stroke="#000" stroke-width="2.6" stroke-linecap="butt" d="M23.5 14.8 H37.5 Q38.7 14.8 38.7 16 V34"/><rect x="17.2" y="19.9" width="18.3" height="21.6" rx="1.6" fill="none" stroke="#000" stroke-width="2.6"/></svg>
<div style="position:absolute;left:3082px;top:607.5px;width:252px;height:38px;box-sizing:border-box;background:#e3e2df;border:1px solid #cfcecb;box-shadow:0 4px 14px rgba(0,0,0,0.22)"></div>
<div id="T_tip" class="t" style="left:3093.40px;top:615.00px;font-size:23.3px;color:#333;font-weight:normal;font-family:'Liberation Sans',sans-serif;font-style:normal;letter-spacing:0.224px;">Скопировать ссылку</div>
<svg style="position:absolute;left:0px;top:0px;overflow:visible;pointer-events:none" width="3422" height="1740" viewBox="0 0 3422 1740"><path d="M2224 715 L2858.7 366.5" stroke="#d0000f" stroke-width="7.8" stroke-linecap="butt"/><path d="M2893 347 L2851 352 L2866.8 380 Z" fill="#d0000f"/><circle cx="2202.8" cy="732.4" r="20" fill="#d0000f"/><path d="M2879 1010 L3044.6 629.3" stroke="#d0000f" stroke-width="7.8" stroke-linecap="butt"/><path d="M3059.6 594 L3029.8 623.2 L3059.4 635.4 Z" fill="#d0000f"/><circle cx="2866.6" cy="1033" r="20" fill="#d0000f"/><text x="2203" y="743.5" text-anchor="middle" font-family="Liberation Sans" font-weight="bold" font-size="30" fill="#fff">1</text><text x="2867" y="1044" text-anchor="middle" font-family="Liberation Sans" font-weight="bold" font-size="30" fill="#fff">2</text></svg>
<div style="position:absolute;left:3340px;top:102px;width:82px;height:1638px;background:linear-gradient(to right,rgba(0,0,0,0),rgba(0,0,0,0.035) 50%,rgba(0,0,0,0.1))"></div>
</body></html>
